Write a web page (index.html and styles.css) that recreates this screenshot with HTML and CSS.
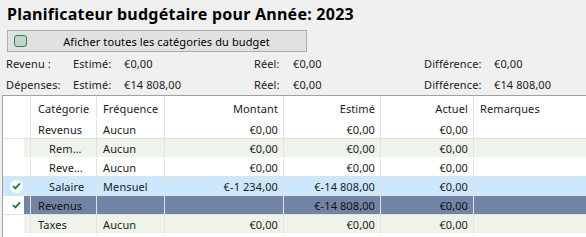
FILE: index.html
```html
<!DOCTYPE html>
<html lang="fr">
<head>
<meta charset="utf-8">
<title>Planificateur budgétaire</title>
<link rel="stylesheet" href="styles.css">
</head>
<body>
<div class="page">
  <h1 class="title">Planificateur budgétaire pour Année: 2023</h1>
  <button class="toggle" type="button"><span class="box"></span><span class="toggle-label">Aficher toutes les catégories du budget</span></button>
  <div class="summary">
    <span>Revenu :</span><span>Estimé:</span><span>€0,00</span><span>Réel:</span><span>€0,00</span><span>Différence:</span><span>€0,00</span>
    <span>Dépenses:</span><span>Estimé:</span><span>€14 808,00</span><span>Réel:</span><span>€0,00</span><span>Différence:</span><span>€14 808,00</span>
  </div>
  <div class="grid">
    <div class="row head">
      <div class="c c0"></div>
      <div class="c c1">Catégorie</div>
      <div class="c c2">Fréquence</div>
      <div class="c num">Montant</div>
      <div class="c num">Estimé</div>
      <div class="c num">Actuel</div>
      <div class="c c6">Remarques</div>
    </div>
    <div class="row">
      <div class="c c0"></div>
      <div class="c c1">Revenus</div>
      <div class="c c2">Aucun</div>
      <div class="c num">€0,00</div>
      <div class="c num">€0,00</div>
      <div class="c num">€0,00</div>
      <div class="c c6"></div>
    </div>
    <div class="row alt">
      <div class="c c0"></div>
      <div class="c c1 sub">Rem…</div>
      <div class="c c2">Aucun</div>
      <div class="c num">€0,00</div>
      <div class="c num">€0,00</div>
      <div class="c num">€0,00</div>
      <div class="c c6"></div>
    </div>
    <div class="row">
      <div class="c c0"></div>
      <div class="c c1 sub">Reve…</div>
      <div class="c c2">Aucun</div>
      <div class="c num">€0,00</div>
      <div class="c num">€0,00</div>
      <div class="c num">€0,00</div>
      <div class="c c6"></div>
    </div>
    <div class="row hover">
      <div class="c c0"><span class="circle"><svg width="9" height="8" viewBox="0 0 9 8"><path d="M1 4.2 L3.4 6.4 L8 1.4" fill="none" stroke="#1e7a3c" stroke-width="1.8"/></svg></span></div>
      <div class="c c1 sub">Salaire</div>
      <div class="c c2">Mensuel</div>
      <div class="c num">€-1 234,00</div>
      <div class="c num">€-14 808,00</div>
      <div class="c num">€0,00</div>
      <div class="c c6"></div>
    </div>
    <div class="row sel">
      <div class="c c0"><svg class="tick" width="9" height="8" viewBox="0 0 9 8"><path d="M1 4.2 L3.4 6.4 L8 1.4" fill="none" stroke="#1e7a3c" stroke-width="1.8"/></svg></div>
      <div class="c c1">Revenus</div>
      <div class="c c2"></div>
      <div class="c num"></div>
      <div class="c num">€-14 808,00</div>
      <div class="c num">€0,00</div>
      <div class="c c6"></div>
    </div>
    <div class="row alt">
      <div class="c c0"></div>
      <div class="c c1">Taxes</div>
      <div class="c c2">Aucun</div>
      <div class="c num">€0,00</div>
      <div class="c num">€0,00</div>
      <div class="c num">€0,00</div>
      <div class="c c6"></div>
    </div>
    <div class="row tail">
      <div class="c c0"></div>
      <div class="c c1"></div>
      <div class="c c2"></div>
      <div class="c num"></div>
      <div class="c num"></div>
      <div class="c num"></div>
      <div class="c c6"></div>
    </div>
  </div>
</div>
</body>
</html>
```

FILE: styles.css
```css
html, body {
  margin: 0;
  padding: 0;
  background: #f0f0f0;
  overflow: hidden;
}
body {
  width: 586px;
  height: 237px;
  font-family: "Noto Sans", "Open Sans", sans-serif;
  font-size: 11px;
  letter-spacing: 0.1px;
  color: #1a1a1a;
}
.page {
  display: flex;
  flex-direction: column;
}
.title {
  margin: 3px 0 0 7px;
  font-size: 16px;
  letter-spacing: 0.25px;
  line-height: 22px;
  font-weight: bold;
  color: #000;
}
.toggle {
  margin: 5px 0 0 7px;
  width: 300px;
  height: 22px;
  padding: 0 0 0 6px;
  display: flex;
  align-items: center;
  background: #e1e1e1;
  border: 1px solid #adadad;
  border-radius: 0;
  font: inherit;
  letter-spacing: inherit;
  color: #000;
}
.box {
  width: 11px;
  height: 10px;
  border: 1px solid #2f8050;
  border-radius: 3px;
  background: #c6d4c9;
  flex: none;
}
.toggle-label {
  flex: 1;
  text-align: center;
}
.summary {
  margin: 1px 0 0 6px;
  display: grid;
  grid-template-columns: 67px 51px 130px 39px 131px 70px 1fr;
  grid-auto-rows: 21px;
  align-items: center;
}
.grid {
  margin: 0 0 0 2px;
  width: 600px;
  border-top: 1px solid #a0a0a0;
  border-left: 1px solid #a0a0a0;
  border-bottom: 1px solid #a0a0a0;
  background: #fff;
  display: flex;
  flex-direction: column;
}
.row {
  display: grid;
  grid-template-columns: 28px 66px 68px 119px 97px 93px 1fr;
  height: 19px;
  border-bottom: 1px solid transparent;
  box-sizing: border-box;
}
.row.head {
  height: 24px;
}
.row.head .c {
  padding-top: 1px;
}
.row.alt, .row.sel, .row.hover {
  border-top: 1px solid #e3e3e3;
  margin-top: -1px;
  height: 20px;
}
.row.tail {
  height: 3px;
}
.c {
  box-sizing: border-box;
  border-right: 1px solid #e3e3e3;
  padding: 0 5px 0 6px;
  white-space: nowrap;
  overflow: hidden;
  display: flex;
  align-items: center;
  line-height: 17px;
}
.c0 {
  padding: 0;
  justify-content: center;
}
.c1 {
  padding-left: 7px;
}
.c1.sub {
  padding-left: 18px;
}
.num {
  justify-content: flex-end;
}
.c6 {
  border-right: none;
  padding-left: 6px;
}
.row.alt .c {
  background: #eff4ea;
}
.row.alt .c0 {
  background: linear-gradient(to right, #fff 0 21px, #eff4ea 21px);
}
.row.hover .c {
  background: #cce8ff;
}
.row.sel .c {
  background: #7184a5;
  color: #101010;
}
.row.sel .c0 {
  background: linear-gradient(to right, #fff 0 21px, #7184a5 21px);
  justify-content: flex-start;
  padding-left: 9px;
}
.row.hover .c0 {
  justify-content: flex-start;
  padding-left: 7px;
}
.circle {
  width: 13px;
  height: 13px;
  border-radius: 50%;
  background: #fff;
  display: flex;
  align-items: center;
  justify-content: center;
}
.tick {
  display: block;
}
```
